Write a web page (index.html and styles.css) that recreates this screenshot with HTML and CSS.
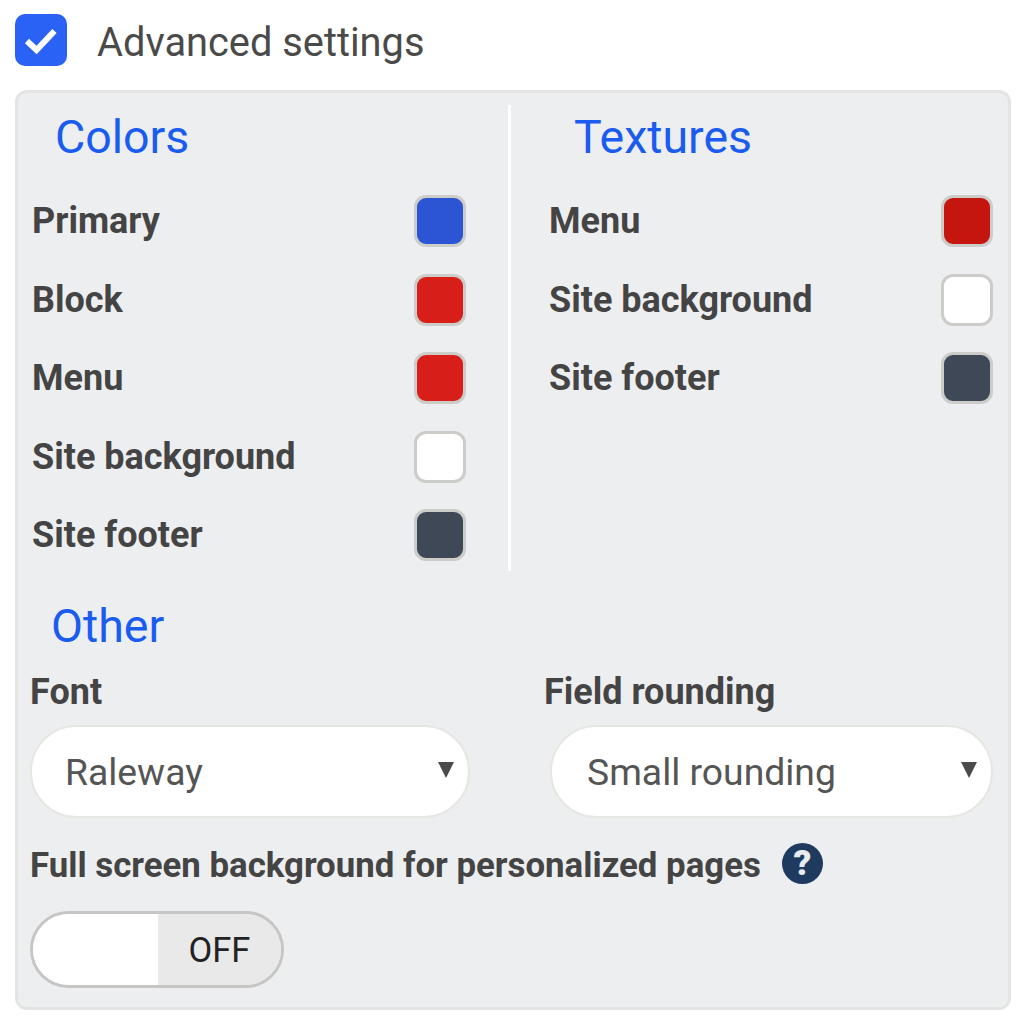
FILE: index.html
```html
<!DOCTYPE html>
<html>
<head>
  <title>Advanced settings</title>
  <link rel="stylesheet" href="styles.css">
</head>
<body>
  <div class="check-row">
    <div class="checkbox">
      <svg width="34" height="28" viewBox="0 0 34 28"><path d="M3 15 L12.5 24 L30.5 5" fill="none" stroke="#fff" stroke-width="6"/></svg>
    </div>
    <span class="check-label">Advanced settings</span>
  </div>

  <div class="panel">
    <div class="columns">
      <div class="col col-colors">
        <h2 class="heading heading-colors">Colors</h2>
        <div class="row"><span>Primary</span><i class="swatch blue"></i></div>
        <div class="row"><span>Block</span><i class="swatch red"></i></div>
        <div class="row"><span>Menu</span><i class="swatch red"></i></div>
        <div class="row"><span>Site background</span><i class="swatch white"></i></div>
        <div class="row"><span>Site footer</span><i class="swatch slate"></i></div>
      </div>
      <div class="col col-textures">
        <h2 class="heading heading-textures">Textures</h2>
        <div class="row"><span>Menu</span><i class="swatch dark-red"></i></div>
        <div class="row"><span>Site background</span><i class="swatch white"></i></div>
        <div class="row"><span>Site footer</span><i class="swatch slate"></i></div>
      </div>
    </div>

    <h2 class="heading heading-other">Other</h2>
    <div class="fields">
      <div class="field">
        <div class="field-label">Font</div>
        <div class="select"><span>Raleway</span><i class="arrow"></i></div>
      </div>
      <div class="field field-right">
        <div class="field-label">Field rounding</div>
        <div class="select"><span>Small rounding</span><i class="arrow"></i></div>
      </div>
    </div>

    <div class="full-row">
      <span class="field-label full-label">Full screen background for personalized pages</span>
      <span class="help">?</span>
    </div>
    <div class="toggle">
      <div class="toggle-knob"></div>
      <div class="toggle-off">OFF</div>
    </div>
  </div>
</body>
</html>
```

FILE: styles.css
```css
* {
  box-sizing: border-box;
}
body {
  margin: 0;
  padding: 14px 13px 0 15px;
  background: #fff;
  font-family: Roboto, "Liberation Sans", sans-serif;
  color: #444;
}
.check-row {
  display: flex;
  align-items: center;
  height: 52px;
}
.checkbox {
  width: 52px;
  height: 52px;
  border-radius: 10px;
  background: #2962f5;
  display: flex;
  align-items: center;
  justify-content: center;
}
.check-label {
  margin-left: 30px;
  margin-top: 4px;
  font-size: 39.8px;
  color: #4a4a4a;
}
.panel {
  margin-top: 24px;
  height: 920px;
  padding: 12px 15px 0 0;
  background: #edeef0;
  border: 3px solid #e4e4e2;
  border-radius: 12px;
}
.columns {
  display: grid;
  grid-template-columns: 493px 1fr;
}
.col {
  padding-bottom: 10px;
}
.col-colors {
  padding-left: 14px;
  padding-right: 42px;
  border-right: 3px solid #fff;
}
.col-textures {
  padding-left: 38px;
}
.heading {
  margin: 0 0 26px;
  font-size: 46.5px;
  line-height: 64px;
  font-weight: 400;
  color: #1a5cf0;
}
.heading-colors {
  padding-left: 23px;
}
.heading-textures {
  padding-left: 25px;
}
.heading-other {
  margin: 23px 0 14px 33px;
}
.row {
  display: flex;
  align-items: center;
  justify-content: space-between;
  height: 52px;
  margin-bottom: 26.5px;
  font-size: 36px;
  font-weight: 700;
  color: #444;
}
.row:last-child {
  margin-bottom: 0;
}
.swatch {
  width: 52px;
  height: 52px;
  border-radius: 12px;
  border: 3px solid #ccccc9;
}
.blue { background: #2b55d3; }
.red { background: #d81e18; }
.dark-red { background: #c5150f; }
.white { background: #fff; }
.slate { background: #3f4856; }
.fields {
  display: grid;
  grid-template-columns: 514px 1fr;
  padding-left: 12px;
}
.field-label {
  font-size: 36px;
  font-weight: 700;
  line-height: 40px;
  color: #444;
}
.full-label {
  font-size: 34.8px;
}
.field-right .select {
  margin-left: 6px;
  padding-left: 35px;
}
.select {
  margin-top: 13px;
  height: 93px;
  border-radius: 46px;
  border: 2px solid #e6e6e3;
  background: #fff;
  display: flex;
  align-items: center;
  justify-content: space-between;
  padding: 0 14px 0 33px;
  font-size: 37.3px;
  color: #555;
}
.field:first-child .select {
  width: 440px;
}
.arrow {
  width: 0;
  height: 0;
  margin-bottom: 4px;
  border-left: 8px solid transparent;
  border-right: 8px solid transparent;
  border-top: 16px solid #4a4a4a;
}
.full-row {
  display: flex;
  align-items: center;
  margin: 27px 0 0 12px;
}
.help {
  width: 41px;
  height: 41px;
  margin-left: 21px;
  margin-top: -4px;
  border-radius: 50%;
  background: #1e3a5f;
  color: #e8ebf0;
  display: flex;
  align-items: center;
  justify-content: center;
  font-size: 35px;
  font-weight: 900;
}
.toggle {
  display: flex;
  width: 254px;
  height: 77px;
  margin: 26px 0 0 12px;
  border: 3px solid #c6c6c4;
  border-radius: 39px;
  overflow: hidden;
}
.toggle-knob {
  width: 125px;
  background: #fff;
}
.toggle-off {
  flex: 1;
  display: flex;
  align-items: center;
  justify-content: center;
  background: #e9e9e9;
  color: #222;
  font-size: 34.5px;
}
```
